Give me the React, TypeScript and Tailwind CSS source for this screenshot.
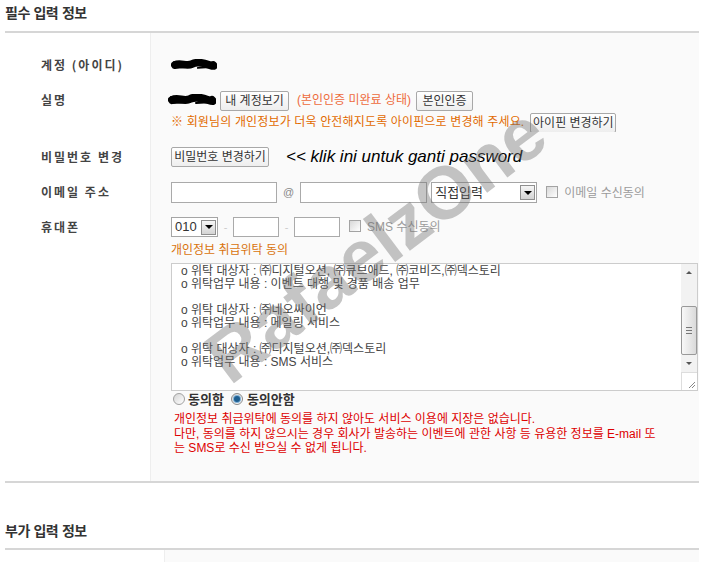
import React from "react";

const consentLines = [
  "o 위탁 대상자 : ㈜디지털오션, ㈜큐브애드, ㈜코비즈,㈜덱스토리",
  "o 위탁업무 내용 : 이벤트 대행 및 경품 배송 업무",
  "",
  "o 위탁 대상자 : ㈜네오싸이언",
  "o 위탁업무 내용 : 메일링 서비스",
  "",
  "o 위탁 대상자 : ㈜디지털오션,㈜덱스토리",
  "o 위탁업무 내용 : SMS 서비스",
];

function Scribble({ w }: { w: number }) {
  return (
    <svg width={w} height="12" viewBox="0 0 48 12" className="shrink-0">
      <path
        d="M4 6 C10 3, 16 8, 22 5 S 34 4, 40 6 S 45 7, 44 6"
        stroke="#000"
        strokeWidth="8"
        fill="none"
        strokeLinecap="round"
      />
      <path d="M3 3 L20 4 M26 3 L44 4 M4 9 L22 8 M28 9 L45 8" stroke="#000" strokeWidth="2" strokeLinecap="round" />
    </svg>
  );
}

function Btn({ w, children }: { w: number; children: React.ReactNode }) {
  return (
    <button
      style={{ width: w }}
      className="h-[20px] shrink-0 rounded-[2px] border border-[#a8a8a8] bg-gradient-to-b from-white to-[#eeeeee] text-[12px] leading-none text-[#333]"
    >
      {children}
    </button>
  );
}

function Arrow() {
  return (
    <span className="flex h-[15px] w-[15px] items-center justify-center border border-[#8f8f8f] bg-gradient-to-b from-[#f6f6f6] to-[#d4d4d4]">
      <span className="h-0 w-0 border-x-[4px] border-t-[4px] border-x-transparent border-t-black" />
    </span>
  );
}

function Check() {
  return (
    <span className="inline-block h-[12px] w-[12px] shrink-0 border border-[#a3a3a3] bg-gradient-to-br from-[#d8d8d8] to-white" />
  );
}

function Label({ children, pt }: { children: React.ReactNode; pt: string }) {
  return (
    <div className={`${pt} pl-[36px] font-['Noto_Sans_CJK_KR',sans-serif] text-[12px] font-bold leading-[20px] tracking-[2px] text-[#444]`}>
      {children}
    </div>
  );
}

export default function App() {
  return (
    <div className="relative h-[562px] w-[711px] overflow-hidden bg-white font-['Liberation_Sans','Noto_Sans_CJK_KR',sans-serif]">
      <div className="ml-[5px] w-[694px]">
        {/* 필수 입력 정보 */}
        <h2 className="h-[31px] pt-[2px] font-['Noto_Sans_CJK_KR',sans-serif] text-[14px] font-bold leading-[21px] tracking-[-0.5px] text-[#333] [word-spacing:1px]">
          필수 입력 정보
        </h2>
        <div className="h-[2px] bg-[#d6d6d6]" />

        <div className="grid grid-cols-[145px_549px]">
          <Label pt="pt-[22px]">계정 (아이디)</Label>
          <div className="border-l border-[#eeeeee] bg-[#fafafa] pl-[20px] pt-[22px]">
            <div className="flex h-[20px] items-center">
              <Scribble w={46} />
            </div>
          </div>

          <Label pt="pt-[15px]">실명</Label>
          <div className="border-l border-[#eeeeee] bg-[#fafafa] pl-[20px] pt-[15px]">
            <div className="flex h-[20px] items-center">
              <span className="-ml-[3px]">
                <Scribble w={48} />
              </span>
              <span className="ml-[4px]">
                <Btn w={69}>내 계정보기</Btn>
              </span>
              <span className="ml-[8px] text-[12px] text-[#ee6a3c]">(본인인증 미완료 상태)</span>
              <span className="ml-[5px]">
                <Btn w={57}>본인인증</Btn>
              </span>
            </div>
            <div className="mt-[1px] flex h-[21px] items-center">
              <span className="text-[12px] tracking-[0.15px] text-[#e26a00]">
                ※ 회원님의 개인정보가 더욱 안전해지도록 아이핀으로 변경해 주세요.
              </span>
              <span className="ml-[6px]">
                <Btn w={86}>아이핀 변경하기</Btn>
              </span>
            </div>
          </div>

          <Label pt="pt-[15px]">비밀번호 변경</Label>
          <div className="border-l border-[#eeeeee] bg-[#fafafa] pl-[20px] pt-[15px]">
            <div className="flex h-[20px] items-center">
              <Btn w={98}>비밀번호 변경하기</Btn>
              <span className="ml-[17px] text-[17px] italic text-black">
                &lt;&lt; klik ini untuk ganti password
              </span>
            </div>
          </div>

          <Label pt="pt-[15px]">이메일 주소</Label>
          <div className="border-l border-[#eeeeee] bg-[#fafafa] pl-[20px] pt-[15px]">
            <div className="flex h-[21px] items-center">
              <span className="h-[21px] w-[106px] border border-[#aaaaaa] bg-white" />
              <span className="mx-[6px] text-[11px] text-[#888]">@</span>
              <span className="h-[21px] w-[127px] border border-[#aaaaaa] bg-white" />
              <span className="ml-[4px] flex h-[21px] w-[106px] items-center justify-between border border-[#a5a5a5] bg-white pl-[3px] pr-[1px]">
                <span className="text-[13px] text-[#333]">직접입력</span>
                <Arrow />
              </span>
              <span className="ml-[9px]">
                <Check />
              </span>
              <span className="ml-[6px] text-[12px] text-[#9a9a9a]">이메일 수신동의</span>
            </div>
          </div>

          <Label pt="pt-[14px]">휴대폰</Label>
          <div className="border-l border-[#eeeeee] bg-[#fafafa] pb-[25px] pl-[20px] pr-[2px] pt-[14px]">
            <div className="flex h-[20px] items-center">
              <span className="flex h-[20px] w-[47px] items-center justify-between border border-[#a5a5a5] bg-white pl-[3px] pr-[1px]">
                <span className="text-[13px] text-[#333]">010</span>
                <Arrow />
              </span>
              <span className="w-[15px] text-center text-[11px] text-[#ccc]">-</span>
              <span className="h-[20px] w-[46px] border border-[#aaaaaa] bg-white" />
              <span className="w-[15px] text-center text-[11px] text-[#ccc]">-</span>
              <span className="h-[20px] w-[46px] border border-[#aaaaaa] bg-white" />
              <span className="ml-[9px]">
                <Check />
              </span>
              <span className="ml-[6px] text-[12px] text-[#9a9a9a]">SMS 수신동의</span>
            </div>

            <div className="mt-[5px] text-[12px] leading-[16px] text-[#d9730d]">개인정보 취급위탁 동의</div>

            <div className="mt-[5px] flex h-[128px] w-[527px] border border-[#cccccc] bg-white">
              <div className="flex-1 pl-[9px] pt-[1px] text-[12px] leading-[13px] text-[#444]">
                {consentLines.map((l, i) => (
                  <div key={i} className="h-[13px]">
                    {l}
                  </div>
                ))}
              </div>
              <div className="flex w-[16px] flex-col bg-[#f2f2f2]">
                <div className="flex h-[17px] items-center justify-center">
                  <span className="h-0 w-0 border-x-[3px] border-b-[3px] border-x-transparent border-b-[#555]" />
                </div>
                <div className="h-[25px]" />
                <div className="flex h-[49px] items-center justify-center rounded-[2px] border border-[#999] bg-gradient-to-r from-[#f8f8f8] to-[#dadada]">
                  <div className="flex flex-col gap-[2px]">
                    <span className="h-px w-[6px] bg-[#777]" />
                    <span className="h-px w-[6px] bg-[#777]" />
                    <span className="h-px w-[6px] bg-[#777]" />
                  </div>
                </div>
                <div className="flex h-[17px] items-center justify-center">
                  <span className="h-0 w-0 border-x-[3px] border-t-[3px] border-x-transparent border-t-[#555]" />
                </div>
                <div className="flex flex-1 items-end justify-end border-l border-t border-[#dddddd] bg-white p-[2px]">
                  <svg width="7" height="7" viewBox="0 0 7 7">
                    <path d="M1 7 L7 1 M4 7 L7 4" stroke="#888" strokeWidth="1" />
                  </svg>
                </div>
              </div>
            </div>

            <div className="flex h-[16px] items-center text-[13px] font-bold text-[#333]">
              <span className="ml-[2px] h-[12px] w-[12px] rounded-full border border-[#a0a0a0] bg-gradient-to-br from-[#d5d5d5] to-white" />
              <span className="ml-[3px] font-['Noto_Sans_CJK_KR',sans-serif]">동의함</span>
              <span className="ml-[7px] flex h-[12px] w-[12px] items-center justify-center rounded-full border border-[#8a8a8a] bg-gradient-to-br from-[#d5d5d5] to-white">
                <span className="h-[6px] w-[6px] rounded-full bg-[#1d5d8f] shadow-[0_0_0_1px_#7fb0d6]" />
              </span>
              <span className="ml-[4px] font-['Noto_Sans_CJK_KR',sans-serif]">동의안함</span>
            </div>

            <div className="mt-[5px] pl-[3px] text-[12px] leading-[14.5px] text-[#dd0000]">
              <div>개인정보 취급위탁에 동의를 하지 않아도 서비스 이용에 지장은 없습니다.</div>
              <div className="whitespace-nowrap">
                다만, 동의를 하지 않으시는 경우 회사가 발송하는 이벤트에 관한 사항 등 유용한 정보를 E-mail 또
              </div>
              <div>는 SMS로 수신 받으실 수 없게 됩니다.</div>
            </div>
          </div>
        </div>
        <div className="h-[2px] bg-[#d6d6d6]" />

        {/* 부가 입력 정보 */}
        <h2 className="pb-[7px] pt-[37px] font-['Noto_Sans_CJK_KR',sans-serif] text-[14px] font-bold leading-[21px] tracking-[-0.5px] text-[#333] [word-spacing:1px]">
          부가 입력 정보
        </h2>
        <div className="h-[2px] bg-[#d6d6d6]" />
        <div className="grid h-[20px] grid-cols-[159px_535px]">
          <div />
          <div className="border-l border-[#eeeeee] bg-[#fafafa]" />
        </div>
      </div>

      {/* watermark */}
      <div className="pointer-events-none absolute left-[376px] top-[245px] -translate-x-1/2 -translate-y-1/2 -rotate-[37deg] whitespace-nowrap font-['Liberation_Sans',sans-serif] text-[74px] font-bold leading-none text-[rgba(110,110,110,0.4)]">
        RafaelzOne
      </div>
    </div>
  );
}
